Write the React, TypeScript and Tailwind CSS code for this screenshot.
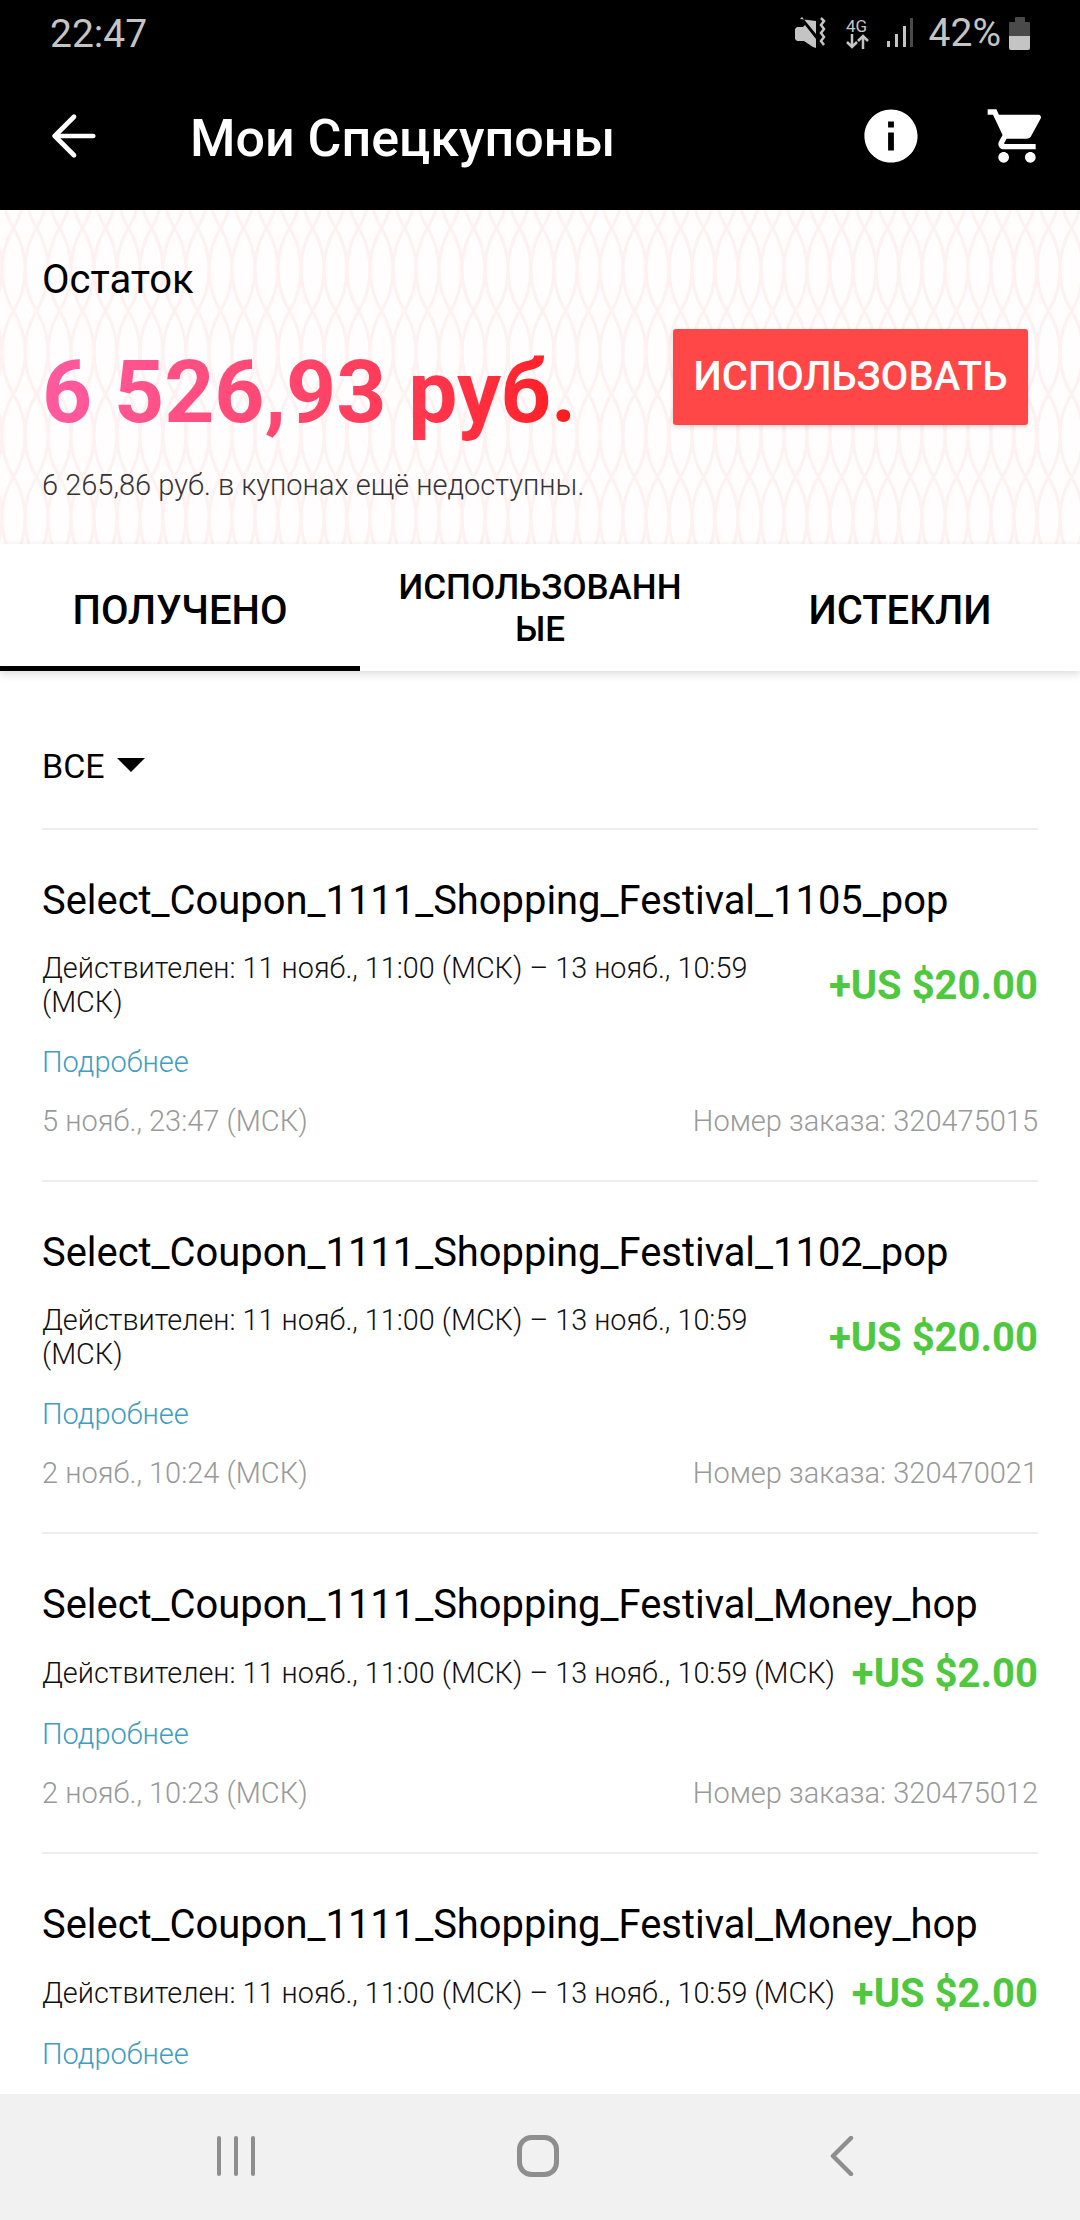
import { ArrowLeft } from 'lucide-react'

interface Coupon {
  title: string
  validity: string
  amount: string
  date?: string
  order?: string
}

const coupons: Coupon[] = [
  {
    title: 'Select_Coupon_1111_Shopping_Festival_1105_pop',
    validity: 'Действителен: 11 нояб., 11:00 (МСК) – 13 нояб., 10:59 (МСК)',
    amount: '+US $20.00',
    date: '5 нояб., 23:47 (МСК)',
    order: 'Номер заказа: 320475015',
  },
  {
    title: 'Select_Coupon_1111_Shopping_Festival_1102_pop',
    validity: 'Действителен: 11 нояб., 11:00 (МСК) – 13 нояб., 10:59 (МСК)',
    amount: '+US $20.00',
    date: '2 нояб., 10:24 (МСК)',
    order: 'Номер заказа: 320470021',
  },
  {
    title: 'Select_Coupon_1111_Shopping_Festival_Money_hop',
    validity: 'Действителен: 11 нояб., 11:00 (МСК) – 13 нояб., 10:59 (МСК)',
    amount: '+US $2.00',
    date: '2 нояб., 10:23 (МСК)',
    order: 'Номер заказа: 320475012',
  },
  {
    title: 'Select_Coupon_1111_Shopping_Festival_Money_hop',
    validity: 'Действителен: 11 нояб., 11:00 (МСК) – 13 нояб., 10:59 (МСК)',
    amount: '+US $2.00',
  },
]

function StatusBar() {
  return (
    <div className="flex h-[66px] items-center justify-between pl-[50px] pr-[50px] text-[39px] text-[#c4c4c4]">
      <span className="mt-[2px]">22:47</span>
      <div className="flex items-center">
        {/* muted vibrate */}
        <svg width="32" height="32" viewBox="0 0 32 32" fill="#c4c4c4" className="mr-[18px]">
          <path d="M0 12l2-2h6l2-2 11 14v9l-3-1-9-6H2l-2-2z" />
          <path d="M5 2l2-2 14 17V4z" />
          <path d="M26 1l3 3-3 4 3 4-3 4 3 4-3 4 3 4" fill="none" stroke="#c4c4c4" strokeWidth="2.500" />
        </svg>
        <div className="mr-[17px] flex w-[24px] flex-col items-center text-[17px] leading-[16px]">
          <span>4G</span>
          <svg width="24" height="15" viewBox="0 0 24 15" fill="none" stroke="#c4c4c4" strokeWidth="2.500">
            <path d="M7 0v13M2 8l5 5 5-5M18 15V2M13 7l5-5 5 5" />
          </svg>
        </div>
        <svg width="28" height="30" viewBox="0 0 28 30" className="mr-[15px]">
          <rect x="1" y="23" width="3" height="6" fill="#c4c4c4" />
          <rect x="9" y="16" width="3" height="13" fill="#c4c4c4" />
          <rect x="17" y="8" width="3" height="21" fill="#c4c4c4" />
          <rect x="24" y="0" width="3" height="29" fill="#4a4a4a" />
        </svg>
        <span className="mr-[8px] leading-none">42%</span>
        <div className="flex flex-col items-center">
          <div className="h-[5px] w-[10px] rounded-t-[1px] bg-[#4a4a4a]" />
          <div className="h-[14px] w-[21px] rounded-t-[1px] bg-[#4a4a4a]" />
          <div className="h-[14px] w-[21px] rounded-b-[2px] bg-[#c4c4c4]" />
        </div>
      </div>
    </div>
  )
}

function AppHeader() {
  return (
    <div className="flex h-[144px] items-center pb-[4px] pl-[41px] pr-[31px] text-white">
      <ArrowLeft size={66} strokeWidth={1.7} className="shrink-0" />
      <h1 className="mt-[6px] ml-[83px] flex-1 text-[52px] font-medium">Мои Спецкупоны</h1>
      <svg width="58" height="58" viewBox="0 0 24 24" fill="#fff" className="mr-[65px]">
        <path d="M12 1C5.900 1 1 5.900 1 12s4.900 11 11 11 11-4.900 11-11S18.100 1 12 1zm1.200 17h-2.400v-7.500h2.400V18zm0-9.500h-2.400V6h2.400v2.500z" />
      </svg>
      <svg width="64" height="64" viewBox="0 0 24 24" fill="#fff">
        <path d="M7 18c-1.100 0-2 .9-2 2s.9 2 2 2 2-.9 2-2-.9-2-2-2zM1 2v2h2l3.600 7.590-1.350 2.450c-.16.28-.25.61-.25.960 0 1.100.9 2 2 2h12v-2H7.420c-.14 0-.25-.11-.25-.25l.03-.12.9-1.630h7.450c.75 0 1.410-.41 1.750-1.030l3.580-6.490A1 1 0 0 0 20 4H5.210l-.94-2H1zm16 16c-1.100 0-2 .9-2 2s.9 2 2 2 2-.9 2-2-.9-2-2-2z" />
      </svg>
    </div>
  )
}

// faint woven lens shapes behind the balance block
function WavePattern() {
  return (
    <svg className="absolute inset-0 h-full w-full" aria-hidden="true">
      <defs>
        <pattern id="weave" width="23" height="83" patternUnits="userSpaceOnUse" x="2" y="18">
          <g fill="none" stroke="#fdf1f1" strokeWidth="3">
            <path d="M11.500 0C3 14 0 28 0 41.500S3 69 11.500 83" />
            <path d="M11.500 0C20 14 23 28 23 41.500S20 69 11.500 83" />
          </g>
        </pattern>
      </defs>
      <rect width="100%" height="100%" fill="url(#weave)" />
    </svg>
  )
}

function BalanceCard() {
  return (
    <div className="relative h-[334px] overflow-hidden bg-[#fffdfd]">
      <WavePattern />
      <div className="relative px-[42px] pt-[46px]">
        <div className="text-[40px] leading-[48px] text-black">Остаток</div>
        <div className="mt-[38px] flex items-center justify-between pr-[10px]">
          <span className="bg-gradient-to-r from-[#ff5aa0] to-[#ff1a1a] bg-clip-text text-[87.500px] leading-[100px] font-bold text-transparent">
            6 526,93 руб.
          </span>
          <button className="-mt-[30px] h-[96px] w-[355px] rounded-[3px] bg-[#ff4747] text-[40px] font-medium whitespace-nowrap text-white shadow-[0_2px_4px_rgba(0,0,0,0.15)]">
            ИСПОЛЬЗОВАТЬ
          </button>
        </div>
        <div className="mt-[25px] text-[29px] leading-[36px] font-light text-[#333]">
          6 265,86 руб. в купонах ещё недоступны.
        </div>
      </div>
    </div>
  )
}

function Tabs() {
  return (
    <div className="relative z-10 grid h-[127px] grid-cols-3 bg-white text-center text-[40px] font-medium text-black shadow-[0_3px_8px_rgba(0,0,0,0.14)]">
      <div className="flex items-center justify-center border-b-[5px] border-black pt-[11px]">ПОЛУЧЕНО</div>
      <div className="flex items-center justify-center px-[34px] pt-[3px] text-[35px] leading-[42px] [word-break:break-all]">
        ИСПОЛЬЗОВАННЫЕ
      </div>
      <div className="flex items-center justify-center pt-[6px]">ИСТЕКЛИ</div>
    </div>
  )
}

function CouponRow({ coupon }: { coupon: Coupon }) {
  return (
    <div className="border-t-2 border-[#eeeeee] pt-[46px] pb-[39px]">
      <div className="text-[39.900px] leading-[50px] text-black">{coupon.title}</div>
      <div className="mt-[25px] flex items-center justify-between gap-[8px]">
        <div className="min-w-0 flex-1 text-[28.800px] leading-[34px] font-light text-[#111]">{coupon.validity}</div>
        <div className="mt-[2px] text-[40px] leading-[34px] font-bold whitespace-nowrap text-[#4fc840]">{coupon.amount}</div>
      </div>
      <div className="mt-[23px] text-[29px] leading-[40px] font-light text-[#3f9dbf]">Подробнее</div>
      {coupon.date && (
        <div className="mt-[19px] flex justify-between text-[29px] leading-[40px] font-light text-[#999999]">
          <span>{coupon.date}</span>
          <span>{coupon.order}</span>
        </div>
      )}
    </div>
  )
}

function NavBar() {
  return (
    <div className="relative z-10 flex h-[126px] items-center bg-[#f1f1f1] pb-[2px] pl-[216px]">
      <svg width="40" height="40" viewBox="0 0 40 40" fill="none" stroke="#8e8e8e" strokeWidth="4" strokeLinecap="round" className="mr-[261px]">
        <path d="M3 2v36M20 2v36M37 2v36" />
      </svg>
      <svg width="42" height="42" viewBox="0 0 42 42" fill="none" stroke="#8e8e8e" strokeWidth="5" className="mr-[271px]">
        <rect x="2.500" y="2.500" width="37" height="37" rx="12" />
      </svg>
      <svg width="24" height="40" viewBox="0 0 24 40" fill="none" stroke="#8e8e8e" strokeWidth="4.500" strokeLinecap="round" strokeLinejoin="round">
        <path d="M21 2L3 20l18 18" />
      </svg>
    </div>
  )
}

export default function App() {
  return (
    <div className="flex h-[2220px] w-[1080px] flex-col overflow-hidden bg-white font-['Roboto',sans-serif]">
      <div className="bg-black">
        <StatusBar />
        <AppHeader />
      </div>
      <BalanceCard />
      <Tabs />

      <div className="min-h-0 flex-1 overflow-hidden px-[42px]">
        <div className="flex h-[157px] items-center pt-[34px] text-[34px] text-black">
          <span>ВСЕ</span>
          <span className="mb-[4px] ml-[12px] h-0 w-0 border-x-[14px] border-t-[14px] border-x-transparent border-t-black" />
        </div>
        {coupons.map((c, i) => (
          <CouponRow key={i} coupon={c} />
        ))}
      </div>

      <NavBar />
    </div>
  )
}
